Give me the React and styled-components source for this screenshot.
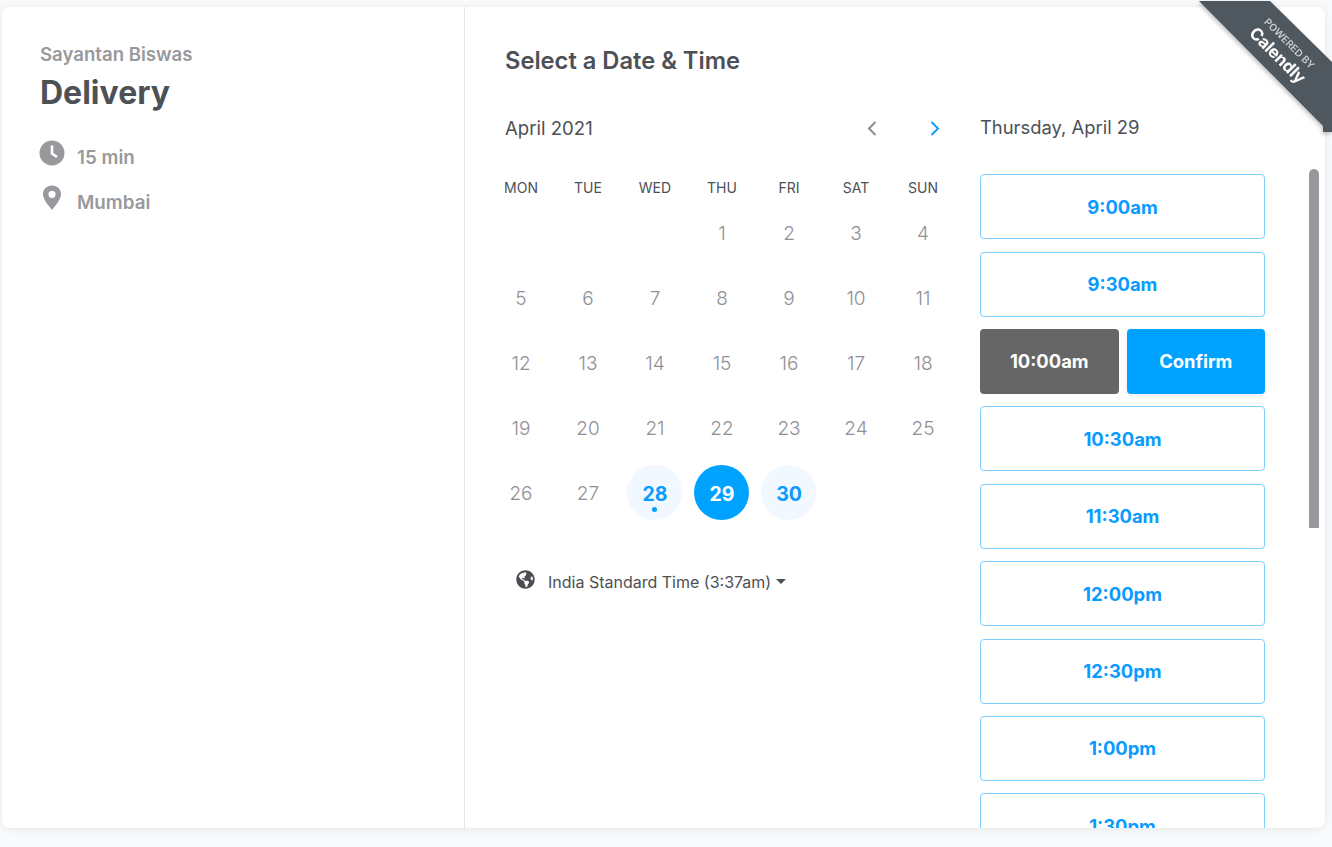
import React from "react"
import styled, { createGlobalStyle } from "styled-components"
import { FaGlobeAmericas } from "react-icons/fa"

const GlobalStyle = createGlobalStyle`
  html, body {
    margin: 0;
    height: 100%;
    overflow: hidden;
    background: #f9fafc;
  }
  * {
    box-sizing: border-box;
  }
`

const Page = styled.div`
  position: relative;
  width: 1332px;
  height: 847px;
  padding: 7px 7px 19px 2px;
  font-family: Inter, "Liberation Sans", sans-serif;
`

const Card = styled.main`
  display: flex;
  height: 100%;
  background: #fff;
  border-radius: 8px;
  overflow: hidden;
  box-shadow: 0 1px 8px rgba(0, 0, 0, 0.08);
`

const Sidebar = styled.aside`
  width: 463px;
  flex-shrink: 0;
  padding: 36px 38px;
  border-right: 1px solid #e6e6e6;
`

const Host = styled.div`
  font-size: 18.6px;
  line-height: 22px;
  font-weight: 600;
  color: #98999d;
`

const EventName = styled.h1`
  margin: 8px 0 29px;
  font-size: 32px;
  line-height: 40px;
  font-weight: 700;
  color: #4d5055;
`

const Detail = styled.div`
  display: flex;
  align-items: center;
  height: 30px;
  margin-bottom: 15px;
  font-size: 18.8px;
  font-weight: 600;
  color: #98999d;
`

const DetailIcon = styled.svg`
  width: 26px;
  height: 26px;
  margin: 0 12px 0 -1px;
  position: relative;
  top: -4px;
`

const Main = styled.section`
  position: relative;
  flex: 1;
  padding: 40px 0 0 40px;
  min-width: 0;
`

const Title = styled.h2`
  margin: 0;
  font-size: 23.7px;
  line-height: 28px;
  font-weight: 600;
  color: #4d5055;
`

const Columns = styled.div`
  display: flex;
  margin-top: 39px;
`

const CalendarColumn = styled.div`
  width: 475px;
  flex-shrink: 0;
`

const MonthBar = styled.div`
  display: flex;
  align-items: center;
  justify-content: space-between;
  width: 438px;
  height: 28px;
`

const MonthName = styled.div`
  font-size: 18.6px;
  color: #4d5055;
`

const Arrows = styled.div`
  display: flex;
  gap: 45px;
`

const Arrow = styled.svg`
  width: 17px;
  height: 17px;
  fill: none;
  stroke: ${({active}) => active ? "#0a9bff" : "#8b8d91"};
  stroke-width: 2;
  display: block;
`

const Grid = styled.div`
  display: grid;
  grid-template-columns: repeat(7, 67px);
  margin-left: -18px;
`

const WeekHead = styled(Grid)`
  margin-top: 38px;
  height: 20px;
`

const WeekDay = styled.div`
  padding-left: 1px;
  text-align: center;
  font-size: 14px;
  line-height: 16px;
  color: #4d5055;
`

const DayGrid = styled(Grid)`
  grid-auto-rows: 65px;
`

const DayCell = styled.div`
  display: flex;
  align-items: center;
  justify-content: center;
`

const Day = styled.div`
  position: relative;
  display: flex;
  align-items: center;
  justify-content: center;
  width: 55px;
  height: 55px;
  padding: 2px 0 0 1px;
  border-radius: 50%;
  font-size: ${({available, selected}) => available || selected ? "19.5px" : "19px"};
  font-weight: ${({available, selected}) => available || selected ? 700 : 300};
  color: ${({available, selected}) => selected ? "#fff" : available ? "#0a9bff" : "#8f9094"};
  background: ${({available, selected}) => selected ? "#00a2ff" : available ? "#f1f8ff" : "transparent"};
`

const TodayDot = styled.span`
  position: absolute;
  left: 25px;
  bottom: 8px;
  width: 5px;
  height: 5px;
  border-radius: 50%;
  background: #00a2ff;
`

const Zone = styled.div`
  display: flex;
  align-items: center;
  margin: 47px 0 0 11px;
  font-size: 16px;
  color: #4d5055;
`

const ZoneIcon = styled(FaGlobeAmericas)`
  width: 19px;
  height: 19px;
  margin: -5px 13px 0 0;
  color: #4a4d52;
`

const Caret = styled.span`
  width: 0;
  height: 0;
  margin: -2px 0 0 5px;
  border-left: 5px solid transparent;
  border-right: 5px solid transparent;
  border-top: 5px solid #4d5055;
`

const TimeColumn = styled.div`
  width: 285px;
  flex-shrink: 0;
`

const DateLabel = styled.div`
  font-size: 18.4px;
  line-height: 28px;
  margin-top: -1px;
  color: #4d5055;
`

const Slots = styled.div`
  display: flex;
  flex-direction: column;
  margin-top: 33.14px;
  gap: 12.42px;
`

const Slot = styled.div`
  display: flex;
  align-items: center;
  justify-content: center;
  height: 65px;
  border: 1px solid #7fd0ff;
  border-radius: 4px;
  font-size: 18.4px;
  font-weight: 700;
  color: #0a9bff;
`

const SelectedRow = styled.div`
  display: flex;
  gap: 8px;
`

const SelectedSlot = styled(Slot)`
  flex: 1;
  border: none;
  color: #fff;
  background: #666;
`

const ConfirmSlot = styled(SelectedSlot)`
  background: #00a2ff;
  box-shadow: 0 2px 6px rgba(0, 0, 0, 0.08);
`

const ScrollThumb = styled.div`
  position: absolute;
  top: 162px;
  right: 6px;
  width: 10px;
  height: 359px;
  border-radius: 5px 5px 0 0;
  background: #98999d;
`

const RibbonShadow = styled.div`
  position: absolute;
  top: 1px;
  right: 0;
  filter: drop-shadow(-1px 2px 2px rgba(0, 0, 0, 0.25));
`

const Ribbon = styled.div`
  position: relative;
  width: 133px;
  height: 131px;
  background: #50585f;
  clip-path: polygon(0 0, 71px 0, 133px 61px, 133px 131px, 124px 131px, 124px 125px);
`

const RibbonText = styled.div`
  position: absolute;
  left: 38px;
  top: 33px;
  width: 90px;
  text-align: center;
  color: #fff;
  transform: rotate(45deg);
`

const RibbonSmall = styled.div`
  font-size: 10px;
  line-height: 12px;
  font-weight: 600;
  color: #c8cbce;
`

const RibbonBrand = styled.div`
  font-size: 17px;
  line-height: 22px;
  font-weight: 700;
  letter-spacing: -0.3px;
`

const WEEKDAYS = ["MON", "TUE", "WED", "THU", "FRI", "SAT", "SUN"]
const AVAILABLE = [28, 30]
const TIMES_BEFORE = ["9:00am", "9:30am"]
const TIMES_AFTER = ["10:30am", "11:30am", "12:00pm", "12:30pm", "1:00pm", "1:30pm"]

const App = () => {
  const blanks = [0, 1, 2]
  const days = Array.from({length: 30}, (_, i) => i + 1)

  return (
    <Page>
      <GlobalStyle />
      <Card>
        <Sidebar>
          <Host>Sayantan Biswas</Host>
          <EventName>Delivery</EventName>
          <Detail>
            <DetailIcon viewBox="0 0 26 26">
              <circle cx="13" cy="13" r="12.5" fill="#98999d" />
              <path d="M13 5.5V13.5L18 17" fill="none" stroke="#fff" strokeWidth="2.6" />
            </DetailIcon>
            15 min
          </Detail>
          <Detail>
            <DetailIcon viewBox="0 0 26 26">
              <path
                fillRule="evenodd"
                fill="#98999d"
                d="M13 0.5C7.8 0.5 4 4.3 4 9.3C4 15 10.5 21.5 13 25C15.5 21.5 22 15 22 9.3C22 4.3 18.2 0.5 13 0.5ZM13 5.7A3.6 3.6 0 1 1 13 12.9A3.6 3.6 0 1 1 13 5.7Z"
              />
            </DetailIcon>
            Mumbai
          </Detail>
        </Sidebar>
        <Main>
          <Title>Select a Date &amp; Time</Title>
          <Columns>
            <CalendarColumn>
              <MonthBar>
                <MonthName>April 2021</MonthName>
                <Arrows>
                  <Arrow viewBox="0 0 17 17"><path d="M11.5 2L5 8.5L11.5 15" /></Arrow>
                  <Arrow viewBox="0 0 17 17" active><path d="M5.5 2L12 8.5L5.5 15" /></Arrow>
                </Arrows>
              </MonthBar>
              <WeekHead>
                {WEEKDAYS.map(day => <WeekDay key={day}>{day}</WeekDay>)}
              </WeekHead>
              <DayGrid>
                {blanks.map(index => <DayCell key={index} />)}
                {days.map(day =>
                  <DayCell key={day}>
                    <Day available={AVAILABLE.includes(day)} selected={day === 29}>
                      {day}
                      {day === 28 && <TodayDot />}
                    </Day>
                  </DayCell>
                )}
              </DayGrid>
              <Zone>
                <ZoneIcon />
                India Standard Time (3:37am)
                <Caret />
              </Zone>
            </CalendarColumn>
            <TimeColumn>
              <DateLabel>Thursday, April 29</DateLabel>
              <Slots>
                {TIMES_BEFORE.map(time => <Slot key={time}>{time}</Slot>)}
                <SelectedRow>
                  <SelectedSlot>10:00am</SelectedSlot>
                  <ConfirmSlot>Confirm</ConfirmSlot>
                </SelectedRow>
                {TIMES_AFTER.map(time => <Slot key={time}>{time}</Slot>)}
              </Slots>
            </TimeColumn>
          </Columns>
          <ScrollThumb />
        </Main>
      </Card>
      <RibbonShadow>
        <Ribbon>
          <RibbonText>
            <RibbonSmall>POWERED BY</RibbonSmall>
            <RibbonBrand>Calendly</RibbonBrand>
          </RibbonText>
        </Ribbon>
      </RibbonShadow>
    </Page>
  )
}

export default App
